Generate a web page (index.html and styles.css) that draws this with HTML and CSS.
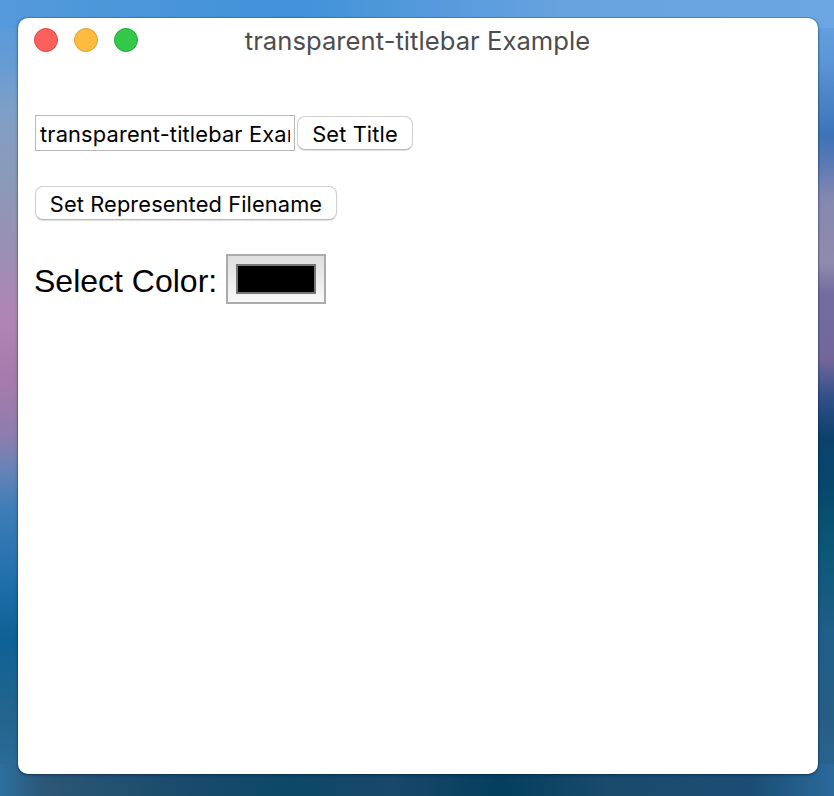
FILE: index.html
```html
<!DOCTYPE html>
<html lang="en">
<head>
<meta charset="utf-8">
<title>transparent-titlebar Example</title>
<link rel="stylesheet" href="styles.css">
</head>
<body>
<main class="window">
  <header class="titlebar">
    <div class="lights"><span class="light close"></span><span class="light minimize"></span><span class="light maximize"></span></div>
    <h1 class="title">transparent-titlebar Example</h1>
  </header>
  <section class="content">
    <div class="row title-row">
      <input class="field" type="text" value="transparent-titlebar Example" aria-label="Window title">
      <button class="button set-title">Set Title</button>
    </div>
    <div class="row file-row"><button class="button set-file">Set Represented Filename</button></div>
    <div class="row color-row">
      <span class="label">Select Color:</span>
      <span class="color-well"><span class="swatch"></span></span>
    </div>
  </section>
</main>
</body>
</html>
```
FILE: styles.css
```css
* { box-sizing: border-box; }
body {
  margin: 0;
  height: 796px;
  padding: 18px 16px 22px 18px;
  overflow: hidden;
  font-family: Inter, "Liberation Sans", sans-serif;
  background:
    linear-gradient(90deg, #5499dc, #4191d9 35%, #68a2df 68%, #6ba5e2) 0 0 / 100% 28px no-repeat,
    linear-gradient(90deg, #2d6f9f, #2c5777 5%, #1b4c6c 20%, #0e4767 35%, #18486a 47%, #053e5c 60%, #194b6c 73%, #1b4d74 90%, #2a6a9b) 0 100% / 100% 32px no-repeat,
    linear-gradient(#549adc, #659bd5 8%, #7f9fc6 14%, #8c99b8 23%, #9b8fb3 32%, #b184b3 40%, #a57bac 48%, #8c7dae 55%, #6683b7 59%, #3e7db7 64%, #2371ac 72%, #0d6296 80%, #23648e 90%, #2d6f9f) 0 0 / 30px 100% no-repeat,
    linear-gradient(#69a5e3, #5a95d5 8%, #3d73b7 17%, #5678b4 20%, #8488b0 25%, #8f8bac 33%, #716c9f 37%, #73679a 45%, #315087 50%, #0b416b 55%, #06486a 61%, #0c5774 69%, #1e5e88 79%, #275d83 90%, #286692) 100% 0 / 30px 100% no-repeat;
}
.window {
  width: 800px;
  height: 756px;
  border-radius: 10px;
  background: #fff;
  box-shadow: 0 0 0 1px rgba(0, 25, 55, .15), 0 1px 3px rgba(0, 20, 45, .45);
}
.titlebar {
  display: grid;
  grid-template-columns: 120px 1fr 120px;
  height: 44px;
  align-items: center;
}
.lights { display: flex; gap: 16px; padding-left: 16px; }
.light { width: 24px; height: 24px; border: 1px solid; border-radius: 50%; }
.close { background: #fc605c; border-color: #e64542; }
.minimize { background: #fdbc40; border-color: #dfa036; }
.maximize { background: #34c84a; border-color: #20aa33; }
.title {
  margin: 2px 1px 0 0;
  text-align: center;
  white-space: nowrap;
  font-size: 25.6px;
  line-height: 34px;
  font-weight: 400;
  letter-spacing: .04px;
  color: #4d4d4d;
}
.content { padding: 53px 17px 0; }
.row { display: flex; }
.title-row { height: 36px; gap: 2px; }
.field {
  width: 260px;
  height: 36px;
  margin: 0;
  padding: 2px 4px 0;
  border: 1px solid #b8b8b8;
  border-radius: 0;
  background: #fff;
  font: 21.8px/32px Inter, sans-serif;
  letter-spacing: .16px;
  color: #000;
  outline: 0;
}
.button {
  height: 34px;
  margin: 1px 0 0;
  padding: 1px 0 0;
  border: 1px solid #d0d0d0;
  border-bottom-color: #b8b8b8;
  border-radius: 8px;
  background: #fff;
  box-shadow: 0 1px 1px rgba(0, 0, 0, .12);
  font: 21.8px/32px Inter, sans-serif;
  letter-spacing: .12px;
  white-space: nowrap;
  color: #000;
}
.set-title { width: 116px; }
.set-file { width: 302px; }
.file-row { margin-top: 34px; }
.color-row { margin-top: 34px; }
.label {
  width: 192px;
  margin-left: -1px;
  font: 32px/54px "Liberation Sans", Arial, sans-serif;
  height: 50px;
  white-space: nowrap;
  color: #000;
}
.color-well {
  width: 100px;
  height: 50px;
  padding: 8px;
  border: 2px solid #ababab;
  background: linear-gradient(#dfdfdf, #f8f8f8);
}
.swatch { display: block; width: 80px; height: 30px; border: 2px solid #777; background: #000; }
```
